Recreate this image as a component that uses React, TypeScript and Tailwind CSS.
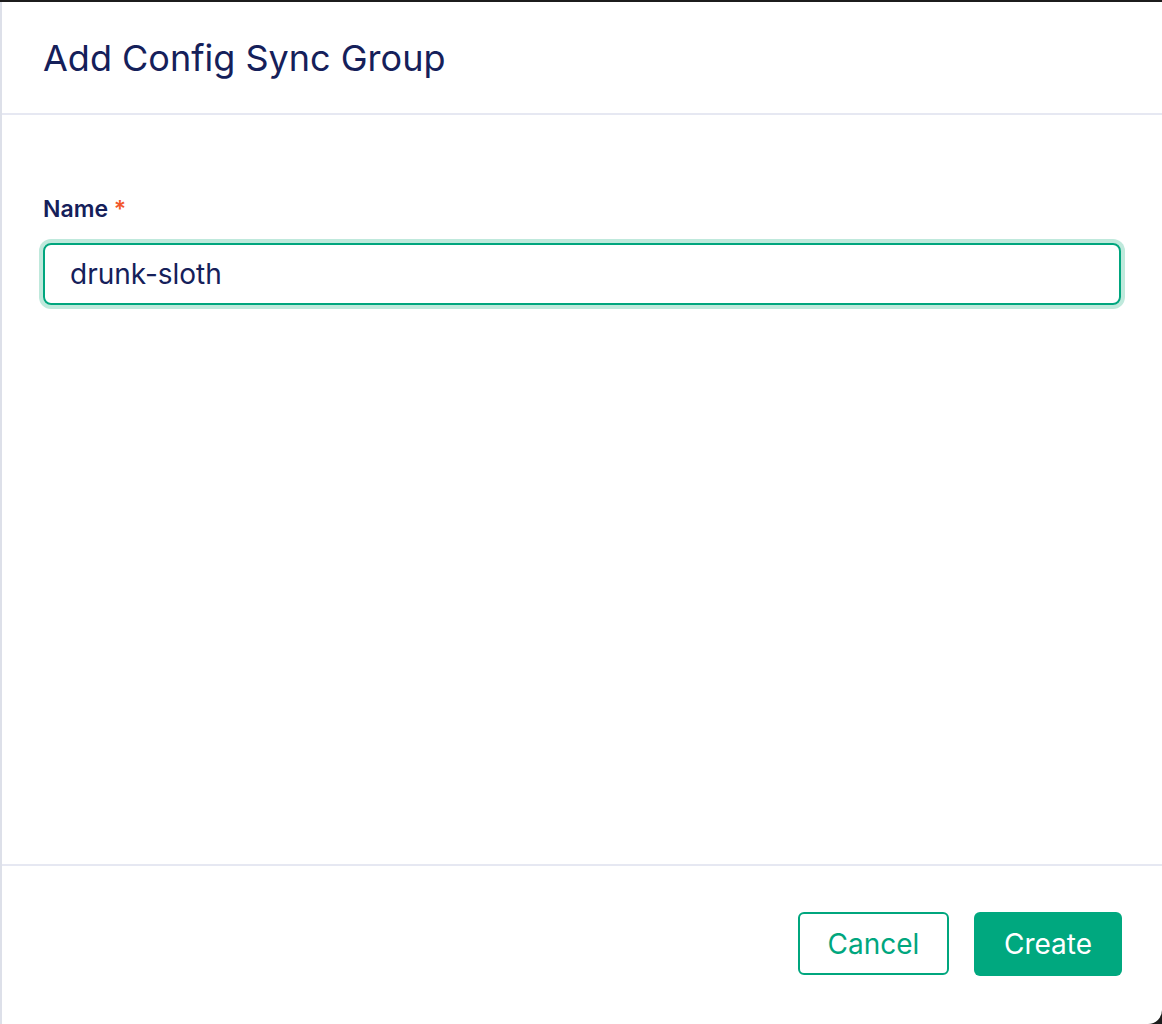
export default function App() {
  return (
    <div className="w-[1162px] h-[1024px] bg-[#1c1c1c] pt-[2px] overflow-hidden" style={{ fontFamily: "Inter, 'Noto Sans', sans-serif" }}>
      <div className="h-[1022px] bg-white rounded-br-[14px] border-l-2 border-[#dde0e9] flex flex-col">
        <div className="h-[113px] flex items-center px-[41px] border-b-2 border-[#e6e8f2]">
          <h2 className="text-[36px] text-[#15205a] leading-none">Add Config Sync Group</h2>
        </div>
        <div className="flex-1 px-[41px] pt-[79px]">
          <label className="block text-[23px] leading-[30px] font-semibold text-[#15205a] mb-[19px]">
            Name <span className="text-[#f2572c]">*</span>
          </label>
          <div className="h-[62px] rounded-[8px] border-2 border-[#00a67e] shadow-[0_0_0_4px_#bfe9dc] flex items-center px-[25px]">
            <span className="text-[28px] text-[#15205a]">drunk-sloth</span>
          </div>
        </div>
        <div className="h-[160px] border-t-2 border-[#e6e8f2] flex items-start justify-end gap-[25px] pt-[46px] pr-[40px]">
          <button className="w-[151px] h-[63px] rounded-[6px] border-2 border-[#00a67e] text-[#00a67e] text-[28px]">Cancel</button>
          <button className="w-[148px] h-[64px] rounded-[6px] bg-[#00a87f] text-white text-[28px]">Create</button>
        </div>
      </div>
    </div>
  );
}
